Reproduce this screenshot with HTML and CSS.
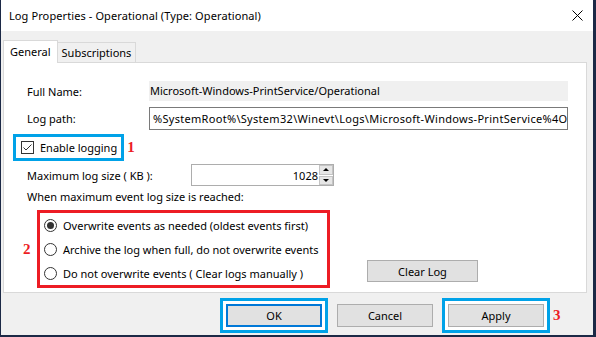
FILE: index.html
```html
<!DOCTYPE html>
<html lang="en">
<head>
    <meta charset="UTF-8">
    <meta name="viewport" content="width=device-width, initial-scale=1.0">
    <title>Log Properties</title>
    <link rel="stylesheet" href="styles.css">
</head>
<body>
    <div class="window">
        <div class="titlebar">
            <span class="title">Log Properties - Operational (Type: Operational)</span>
            <svg class="close" width="11" height="11" viewBox="0 0 11 11">
                <path d="M0.5 0.5 L10.5 10.5 M10.5 0.5 L0.5 10.5" stroke="#000" stroke-width="1" fill="none"/>
            </svg>
        </div>

        <div class="content">
            <div class="tabs">
                <div class="tab active">General</div>
                <div class="tab">Subscriptions</div>
            </div>

            <div class="panel">
                <div class="field-row first">
                    <span class="label">Full Name:</span>
                    <div class="readonly">Microsoft-Windows-PrintService/Operational</div>
                </div>
                <div class="field-row">
                    <span class="label">Log path:</span>
                    <div class="textbox">%SystemRoot%\System32\Winevt\Logs\Microsoft-Windows-PrintService%4O</div>
                </div>

                <div class="enable-row">
                    <div class="mark-blue enable-box">
                        <span class="checkbox">
                            <svg width="11" height="11" viewBox="0 0 11 11">
                                <path d="M1.5 5.5 L4 8 L9.5 2.5" stroke="#333" stroke-width="1" fill="none"/>
                            </svg>
                        </span>
                        <span>Enable logging</span>
                    </div>
                    <span class="step">1</span>
                </div>

                <div class="size-row">
                    <span class="size-label">Maximum log size ( KB ):</span>
                    <div class="spin">
                        <span class="spin-value">1028</span>
                        <div class="spin-buttons">
                            <span class="spin-btn"><i class="arrow-up"></i></span>
                            <span class="spin-btn"><i class="arrow-down"></i></span>
                        </div>
                    </div>
                </div>

                <p class="when">When maximum event log size is reached:</p>

                <div class="policy-row">
                    <span class="step">2</span>
                    <div class="mark-red">
                        <div class="radio-row"><span class="radio checked"></span>Overwrite events as needed (oldest events first)</div>
                        <div class="radio-row"><span class="radio"></span>Archive the log when full, do not overwrite events</div>
                        <div class="radio-row"><span class="radio"></span>Do not overwrite events ( Clear logs manually )</div>
                    </div>
                    <button class="btn clear-btn">Clear Log</button>
                </div>
            </div>

            <div class="footer">
                <div class="mark-blue btn-box">
                    <button class="btn default-btn">OK</button>
                </div>
                <button class="btn cancel-btn">Cancel</button>
                <div class="mark-blue btn-box apply-box">
                    <button class="btn">Apply</button>
                </div>
                <span class="step step-3">3</span>
            </div>
        </div>
    </div>
</body>
</html>
```

FILE: styles.css
```css
body {
    margin: 0;
    width: 596px;
    height: 337px;
    overflow: hidden;
    background-color: #1c2946;
    font-family: "Noto Sans", "Open Sans", sans-serif;
    font-size: 11px;
    color: #000;
}
.window {
    margin-left: 1px;
    width: 592px;
    height: 335px;
    background-color: #f0f0f0;
    display: flex;
    flex-direction: column;
}
.titlebar {
    height: 31px;
    background: #fff;
    display: flex;
    align-items: center;
    justify-content: space-between;
    padding: 0 10px 0 8px;
    box-sizing: border-box;
}
.title {
    font-size: 11px;
    letter-spacing: 0.1px;
}
.close {
    display: block;
}
.content {
    padding: 9px 6px 0 2px;
}
.tabs {
    display: flex;
    align-items: flex-end;
    height: 22px;
}
.tab {
    box-sizing: border-box;
    height: 20px;
    line-height: 19px;
    border: 1px solid #d9d9d9;
    border-bottom: none;
    padding: 0 4px;
    margin-left: -1px;
}
.tab.active {
    height: 23px;
    line-height: 22px;
    background: #fff;
    padding: 0 6px;
    margin-left: 0;
    margin-bottom: -1px;
    position: relative;
    z-index: 1;
}
.panel {
    box-sizing: border-box;
    height: 231px;
    background: #fff;
    border: 1px solid #d9d9d9;
    padding: 0 18px 0 0;
}
.field-row {
    display: flex;
    align-items: center;
    margin-top: 6px;
}
.field-row.first {
    margin-top: 18px;
}
.label {
    width: 122px;
    margin-left: 23px;
    flex-shrink: 0;
}
.readonly {
    flex: 1;
    height: 20px;
    line-height: 20px;
    background: #f0f0f0;
    padding-left: 1px;
}
.textbox {
    flex: 1;
    box-sizing: border-box;
    height: 23px;
    line-height: 21px;
    border: 1px solid #7a7a7a;
    padding-left: 3px;
    white-space: nowrap;
    overflow: hidden;
    letter-spacing: 0.3px;
}
.mark-blue {
    border: 3px solid #00a2e8;
    box-sizing: border-box;
}
.mark-red {
    border: 3px solid #ed1c24;
    box-sizing: border-box;
}
.step {
    font-family: "Liberation Serif", serif;
    font-weight: bold;
    font-size: 15px;
    color: #ed1c24;
}
.enable-row {
    display: flex;
    align-items: center;
    margin: 4px 0 0 9px;
}
.enable-box {
    display: flex;
    align-items: center;
    height: 27px;
    padding: 0 4px 0 5px;
    gap: 6px;
}
.enable-row .step {
    margin-left: 3px;
}
.checkbox {
    box-sizing: border-box;
    width: 13px;
    height: 13px;
    border: 1px solid #333;
    display: flex;
}
.size-row {
    display: flex;
    align-items: center;
    margin-top: 3px;
}
.size-label {
    width: 164px;
    margin-left: 23px;
}
.spin {
    box-sizing: border-box;
    width: 143px;
    height: 22px;
    border: 1px solid #adadad;
    display: flex;
    align-items: center;
}
.spin-value {
    flex: 1;
    text-align: right;
    padding-right: 1px;
}
.spin-buttons {
    width: 14px;
    height: 20px;
    display: flex;
    flex-direction: column;
    gap: 1px;
}
.spin-btn {
    flex: 1;
    background: #e6e6e6;
    border: 1px solid #c4c4c4;
    display: flex;
    align-items: center;
    justify-content: center;
}
.arrow-up {
    border-left: 3px solid transparent;
    border-right: 3px solid transparent;
    border-bottom: 3px solid #000;
}
.arrow-down {
    border-left: 3px solid transparent;
    border-right: 3px solid transparent;
    border-top: 3px solid #000;
}
.when {
    margin: 3px 0 0 23px;
    line-height: 16px;
}
.policy-row {
    display: flex;
    align-items: center;
    margin: 5px 0 0 19px;
}
.policy-row .step {
    width: 14px;
}
.mark-red {
    width: 293px;
    height: 78px;
    padding: 0 0 0 4px;
}
.radio-row {
    display: flex;
    align-items: center;
    height: 24px;
    gap: 6px;
}
.radio {
    box-sizing: border-box;
    width: 13px;
    height: 13px;
    border: 1px solid #333;
    border-radius: 50%;
    display: flex;
    align-items: center;
    justify-content: center;
}
.radio.checked::after {
    content: "";
    width: 7px;
    height: 7px;
    border-radius: 50%;
    background: #333;
}
.btn {
    box-sizing: border-box;
    width: 96px;
    height: 23px;
    background: #e1e1e1;
    border: 1px solid #adadad;
    font-family: inherit;
    font-size: 11px;
    color: #000;
    padding: 0;
}
.clear-btn {
    width: 111px;
    height: 22px;
    margin: 0 0 6px 37px;
    align-self: flex-end;
}
.footer {
    display: flex;
    align-items: center;
    margin: 5px 0 0 217px;
}
.btn-box {
    background: #fff;
    padding: 3px;
}
.default-btn {
    border: 2px solid #0078d7;
}
.cancel-btn {
    margin-left: 9px;
}
.apply-box {
    margin-left: 9px;
}
.step-3 {
    margin-left: 3px;
}
```
